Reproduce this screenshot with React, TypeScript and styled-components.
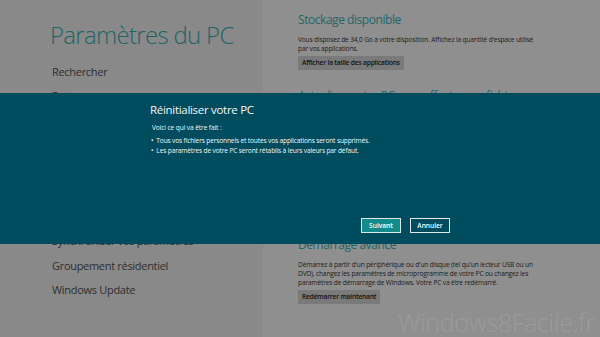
import styled, { createGlobalStyle } from "styled-components";

const GlobalStyle = createGlobalStyle`
  html, body {
    margin: 0;
    padding: 0;
    background: #8f8f8f;
    font-family: "Open Sans", "Noto Sans", "DejaVu Sans", sans-serif;
  }
`;

const Page = styled.div`
  position: relative;
  display: flex;
  width: 600px;
  height: 337px;
  overflow: hidden;
`;

const Sidebar = styled.nav`
  width: 263px;
  flex-shrink: 0;
  background: #898989;
  padding: 19px 0 0 50px;
  box-sizing: border-box;
`;

const Title = styled.h1`
  margin: 0 0 9px;
  font-size: 24px;
  line-height: 32px;
  font-weight: 300;
  color: #1e6466;
  letter-spacing: -0.7px;
`;

const MenuList = styled.ul`
  list-style: none;
  margin: 0;
  padding: 0 0 0 2px;
`;

const MenuItem = styled.li`
  font-size: 11px;
  line-height: 24.2px;
  color: #2e2e2e;
  letter-spacing: -0.3px;
  white-space: nowrap;
`;

const Content = styled.main`
  flex: 1;
  background: #8f8f8f;
  padding: 12px 0 0 35px;
  box-sizing: border-box;
`;

const Section = styled.section<{ $gap?: number }>`
  margin-bottom: ${(p) => p.$gap ?? 18}px;
`;

const Heading = styled.h2`
  margin: 0;
  font-size: 12px;
  line-height: 16px;
  font-weight: 400;
  color: #1f6668;
  letter-spacing: -0.45px;
  white-space: nowrap;
`;

const Text = styled.p`
  margin: 7px 0 0;
  width: 250px;
  font-size: 6.6px;
  line-height: 9.3px;
  letter-spacing: -0.15px;
  color: #1c1c1c;
`;

const GreyButton = styled.button`
  display: block;
  margin-top: 2px;
  height: 14px;
  padding: 0 4px;
  border: none;
  background: #7a7a7a;
  color: #111;
  font-family: inherit;
  font-size: 6.6px;
  font-weight: 600;
  letter-spacing: -0.15px;
`;

const Overlay = styled.div`
  position: absolute;
  left: 0;
  right: 0;
  top: 93px;
  height: 151px;
  background: #004c5f;
  display: flex;
`;

const Dialog = styled.div`
  width: 300px;
  margin-left: 150px;
  padding-top: 9px;
  display: flex;
  flex-direction: column;
  color: #f2f6f7;
`;

const DialogTitle = styled.h2`
  margin: 0;
  font-size: 11.5px;
  line-height: 16px;
  font-weight: 400;
  letter-spacing: -0.3px;
`;

const Lead = styled.p`
  margin: 5px 0 0 2px;
  font-size: 6.6px;
  line-height: 9px;
  letter-spacing: -0.1px;
`;

const Bullets = styled.ul`
  list-style: none;
  margin: 4px 0 0 1px;
  padding: 0;
  font-size: 6.6px;
  line-height: 9.5px;
  letter-spacing: -0.15px;

  li::before {
    content: "•";
    margin-right: 3px;
  }
`;

const Actions = styled.div`
  margin-top: auto;
  margin-bottom: 11px;
  display: flex;
  justify-content: flex-end;
  gap: 9px;
`;

const DialogButton = styled.button<{ $primary?: boolean }>`
  width: 40px;
  height: 15px;
  box-sizing: border-box;
  border: 1.5px solid #dde8eb;
  background: ${(p) => (p.$primary ? "#138b8b" : "#004c5f")};
  color: #fff;
  font-family: inherit;
  font-size: 6.6px;
  font-weight: 600;
  padding: 0;
`;

const Watermark = styled.div`
  position: absolute;
  right: 5px;
  bottom: 0;
  font-size: 25px;
  line-height: 30px;
  font-weight: 300;
  color: #9b9b9b;
  letter-spacing: -0.3px;
`;

const menu = [
  "Rechercher",
  "Partager",
  "Général",
  "Confidentialité",
  "Périphériques",
  "Sans fil",
  "Options d'ergonomie",
  "Synchroniser vos paramètres",
  "Groupement résidentiel",
  "Windows Update",
];

export default function App() {
  return (
    <>
      <GlobalStyle />
      <Page>
        <Sidebar>
          <Title>Paramètres du PC</Title>
          <MenuList>
            {menu.map((m) => (
              <MenuItem key={m}>{m}</MenuItem>
            ))}
          </MenuList>
        </Sidebar>
        <Content>
          <Section>
            <Heading>Stockage disponible</Heading>
            <Text>
              Vous disposez de 34,0 Go à votre disposition. Affichez la quantité d'espace utilisé
              <br />
              par vos applications.
            </Text>
            <GreyButton>Afficher la taille des applications</GreyButton>
          </Section>
          {/* sections below sit partly under the dialog band */}
          <Section>
            <Heading>Actualiser votre PC sans affecter vos fichiers</Heading>
            <Text>
              Si votre PC ne fonctionne pas correctement, vous pouvez l'actualiser sans perdre vos
              photos, votre musique, vos vidéos et autres fichiers personnels.
            </Text>
            <GreyButton>Commencer</GreyButton>
          </Section>
          <Section $gap={16}>
            <Heading>Supprimer tout et réinstaller Windows</Heading>
            <Text>
              Si vous souhaitez recycler votre PC ou repartir de zéro, vous pouvez le réinitialiser
              à ses paramètres par défaut.
            </Text>
            <GreyButton>Commencer</GreyButton>
          </Section>
          <Section>
            <Heading>Démarrage avancé</Heading>
            <Text>
              Démarrez à partir d'un périphérique ou d'un disque (tel qu'un lecteur USB ou un
              <br />
              DVD), changez les paramètres de microprogramme de votre PC ou changez les
              <br />
              paramètres de démarrage de Windows. Votre PC va être redémarré.
            </Text>
            <GreyButton>Redémarrer maintenant</GreyButton>
          </Section>
        </Content>
        <Overlay>
          <Dialog>
            <DialogTitle>Réinitialiser votre PC</DialogTitle>
            <Lead>Voici ce qui va être fait :</Lead>
            <Bullets>
              <li>Tous vos fichiers personnels et toutes vos applications seront supprimés.</li>
              <li>Les paramètres de votre PC seront rétablis à leurs valeurs par défaut.</li>
            </Bullets>
            <Actions>
              <DialogButton $primary>Suivant</DialogButton>
              <DialogButton>Annuler</DialogButton>
            </Actions>
          </Dialog>
        </Overlay>
        <Watermark>Windows8Facile.fr</Watermark>
      </Page>
    </>
  );
}
